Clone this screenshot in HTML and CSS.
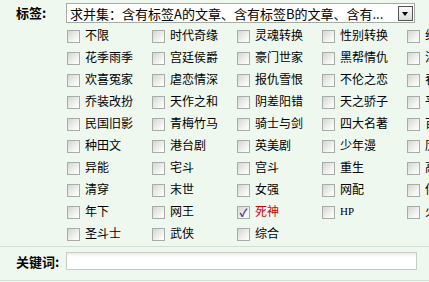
FILE: index.html
```html
<!DOCTYPE html>
<html lang="zh-CN">
<head>
    <meta charset="UTF-8">
    <title>标签筛选</title>
    <link rel="stylesheet" href="styles.css">
</head>
<body>

<div class="search-form">
    <!-- 标签 -->
    <div class="row tags">
        <div class="label">标签:</div>
        <div class="field">
            <div class="select">
                <span class="select-text">求并集：含有标签A的文章、含有标签B的文章、含有...</span>
                <span class="arrow"></span>
            </div>
            <div class="tag-grid">
                <label class="tag"><span class="box"></span>不限</label>
                <label class="tag"><span class="box"></span>时代奇缘</label>
                <label class="tag"><span class="box"></span>灵魂转换</label>
                <label class="tag"><span class="box"></span>性别转换</label>
                <label class="tag"><span class="box"></span>纯爱</label>

                <label class="tag"><span class="box"></span>花季雨季</label>
                <label class="tag"><span class="box"></span>宫廷侯爵</label>
                <label class="tag"><span class="box"></span>豪门世家</label>
                <label class="tag"><span class="box"></span>黑帮情仇</label>
                <label class="tag"><span class="box"></span>江湖恩怨</label>

                <label class="tag"><span class="box"></span>欢喜冤家</label>
                <label class="tag"><span class="box"></span>虐恋情深</label>
                <label class="tag"><span class="box"></span>报仇雪恨</label>
                <label class="tag"><span class="box"></span>不伦之恋</label>
                <label class="tag"><span class="box"></span>春风得意</label>

                <label class="tag"><span class="box"></span>乔装改扮</label>
                <label class="tag"><span class="box"></span>天作之和</label>
                <label class="tag"><span class="box"></span>阴差阳错</label>
                <label class="tag"><span class="box"></span>天之骄子</label>
                <label class="tag"><span class="box"></span>平行世界</label>

                <label class="tag"><span class="box"></span>民国旧影</label>
                <label class="tag"><span class="box"></span>青梅竹马</label>
                <label class="tag"><span class="box"></span>骑士与剑</label>
                <label class="tag"><span class="box"></span>四大名著</label>
                <label class="tag"><span class="box"></span>百合</label>

                <label class="tag"><span class="box"></span>种田文</label>
                <label class="tag"><span class="box"></span>港台剧</label>
                <label class="tag"><span class="box"></span>英美剧</label>
                <label class="tag"><span class="box"></span>少年漫</label>
                <label class="tag"><span class="box"></span>历史</label>

                <label class="tag"><span class="box"></span>异能</label>
                <label class="tag"><span class="box"></span>宅斗</label>
                <label class="tag"><span class="box"></span>宫斗</label>
                <label class="tag"><span class="box"></span>重生</label>
                <label class="tag"><span class="box"></span>高干</label>

                <label class="tag"><span class="box"></span>清穿</label>
                <label class="tag"><span class="box"></span>末世</label>
                <label class="tag"><span class="box"></span>女强</label>
                <label class="tag"><span class="box"></span>网配</label>
                <label class="tag"><span class="box"></span>仙侠</label>

                <label class="tag"><span class="box"></span>年下</label>
                <label class="tag"><span class="box"></span>网王</label>
                <label class="tag checked"><span class="box">✓</span>死神</label>
                <label class="tag"><span class="box"></span><span class="latin">HP</span></label>
                <label class="tag"><span class="box"></span>火影</label>

                <label class="tag"><span class="box"></span>圣斗士</label>
                <label class="tag"><span class="box"></span>武侠</label>
                <label class="tag"><span class="box"></span>综合</label>
            </div>
        </div>
    </div>

    <!-- 关键词 -->
    <div class="row keyword">
        <div class="label">关键词:</div>
        <div class="field">
            <div class="text-input"></div>
        </div>
    </div>
</div>

</body>
</html>
```

FILE: styles.css
```css
html, body { margin: 0; overflow: hidden; }
body {
    background: #eff8ef;
    font-family: "Noto Sans CJK SC", "Liberation Sans", sans-serif;
    font-size: 12px;
    color: #000;
}
.search-form { width: 429px; }
.row { display: flex; border-bottom: 1px solid #d3ddd3; }
.row.tags { padding-top: 3px; padding-bottom: 3px; }
.row.keyword { padding-top: 5px; height: 28px; }
.label {
    width: 50px;
    padding-left: 16px;
    flex: none;
    font-size: 13px;
    font-weight: bold;
    line-height: 20px;
}
.field { flex: 1; min-width: 0; }

.select {
    width: 347px;
    height: 18px;
    border: 1px solid #a5aca5;
    background: #fff;
    display: flex;
    align-items: center;
    justify-content: space-between;
}
.select-text {
    padding-left: 3px;
    font-size: 13px;
    white-space: nowrap;
    overflow: hidden;
}
.arrow {
    width: 13px;
    height: 13px;
    margin-right: 1px;
    border: 1px solid #555;
    background: linear-gradient(#fafafa, #dcdcdc);
    position: relative;
    flex: none;
}
.arrow::after {
    content: "";
    position: absolute;
    left: 3px;
    top: 5px;
    border-left: 3.5px solid transparent;
    border-right: 3.5px solid transparent;
    border-top: 4px solid #000;
}

.tag-grid {
    display: grid;
    grid-template-columns: repeat(5, 85px);
    grid-auto-rows: 22px;
    white-space: nowrap;
}
.tag { display: flex; align-items: center; }
.box {
    width: 11px;
    height: 11px;
    margin: 2px 5px 0 1px;
    border: 1px solid #a8aca8;
    background: linear-gradient(135deg, #d4d6d2, #f6f6f4 70%, #fff);
    flex: none;
    font-size: 11px;
    line-height: 11px;
    text-align: center;
    color: #2b3d9a;
    font-weight: bold;
}
.tag, .tag .latin { line-height: 22px; padding-top: 2px; box-sizing: border-box; }
.tag .latin { font-family: "Liberation Serif", serif; font-size: 11px; padding-top: 0; }
.tag.checked { color: #d40000; }

.text-input {
    width: 349px;
    height: 16px;
    border: 1px solid #c5cdc5;
    background: linear-gradient(#ececec, #fff 4px);
}
```
